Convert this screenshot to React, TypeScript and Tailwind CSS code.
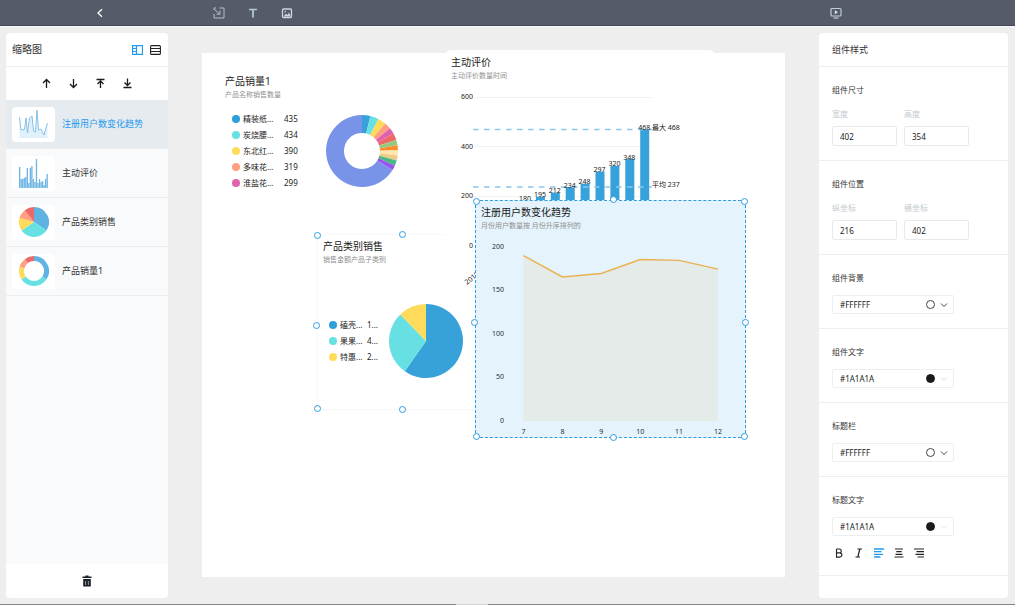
import React from "react";

type Slice = { color: string; to: number };

function slicePath(c: number, r: number, inner: number, from: number, to: number) {
  const pt = (deg: number, rad: number) => {
    const a = ((deg - 90) * Math.PI) / 180;
    return `${(c + rad * Math.cos(a)).toFixed(2)} ${(c + rad * Math.sin(a)).toFixed(2)}`;
  };
  const large = to - from > 180 ? 1 : 0;
  if (inner === 0) return `M${c} ${c}L${pt(from, r)}A${r} ${r} 0 ${large} 1 ${pt(to, r)}Z`;
  return `M${pt(from, inner)}L${pt(from, r)}A${r} ${r} 0 ${large} 1 ${pt(to, r)}L${pt(to, inner)}A${inner} ${inner} 0 ${large} 0 ${pt(from, inner)}Z`;
}

function Pie({ size, inner, slices }: { size: number; inner: number; slices: Slice[] }) {
  return (
    <svg width={size} height={size} viewBox={`0 0 ${size} ${size}`} className="shrink-0" aria-hidden="true">
      {slices.map((s, i) => (
        <path key={i} d={slicePath(size / 2, size / 2, inner, i ? slices[i - 1].to : 0, s.to)} fill={s.color} />
      ))}
    </svg>
  );
}

const donutSlices: Slice[] = [
  { color: "#37a2da", to: 13.5 },
  { color: "#67e0e3", to: 27 },
  { color: "#ffdb5c", to: 40 },
  { color: "#ff9f7f", to: 51 },
  { color: "#e062ae", to: 61 },
  { color: "#eb6a69", to: 72 },
  { color: "#96c97c", to: 81 },
  { color: "#ff8c2e", to: 89 },
  { color: "#ffe7ae", to: 97 },
  { color: "#efcb87", to: 105.5 },
  { color: "#48b984", to: 114 },
  { color: "#9b51f0", to: 122 },
  { color: "#7893e8", to: 360 },
];

const pieSlices: Slice[] = [
  { color: "#37a2da", to: 215 },
  { color: "#67e0e3", to: 316 },
  { color: "#ffdb5c", to: 360 },
];

const thumbSlices: Slice[] = [
  { color: "#5fb3e3", to: 124 },
  { color: "#67e0e3", to: 236 },
  { color: "#ffdb5c", to: 286 },
  { color: "#ff9f7f", to: 322 },
  { color: "#eb6a69", to: 360 },
];

const salesLegend = [
  { name: "精装纸...", value: "435", dot: "bg-[#2f9fdc]" },
  { name: "炭烧腰...", value: "434", dot: "bg-[#67e0e3]" },
  { name: "东北红...", value: "390", dot: "bg-[#ffdb5c]" },
  { name: "多味花...", value: "319", dot: "bg-[#ff9f7f]" },
  { name: "淮盐花...", value: "299", dot: "bg-[#e062ae]" },
];

const categoryLegend = [
  { name: "磕壳...", value: "1...", dot: "bg-[#2f9fdc]" },
  { name: "果果...", value: "4...", dot: "bg-[#67e0e3]" },
  { name: "特惠...", value: "2...", dot: "bg-[#ffdb5c]" },
];

function Legend({ rows, nameClass }: { rows: typeof salesLegend; nameClass: string }) {
  return (
    <ul className="text-[8px] leading-4 text-[#222]">
      {rows.map((r) => (
        <li key={r.name} className="flex items-center gap-[3px]">
          <span className={`size-2 rounded-full ${r.dot}`} />
          <span className={`whitespace-nowrap ${nameClass}`}>{r.name}</span>
          <span>{r.value}</span>
        </li>
      ))}
    </ul>
  );
}

function WidgetHead({ title, sub }: { title: string; sub: string }) {
  return (
    <header className="px-[6px] pt-[5px]">
      <h3 className="text-[10px] leading-[14px] text-[#1a1a1a]">{title}</h3>
      <p className="mt-px text-[7px] leading-[11px] text-[#8f8f8f]">{sub}</p>
    </header>
  );
}

function Handle({ at }: { at: string }) {
  return <span className={`absolute size-[7px] rounded-full border border-[#2f9be0] bg-white ${at}`} />;
}

const bars = [180, 195, 212, 234, 248, 297, 320, 348, 468];

function BarChart() {
  const y = (v: number) => 164 - v * 0.247;
  return (
    <svg width="270" height="205" viewBox="0 0 270 205" className="text-[7px]" fill="#222" aria-hidden="true">
      {[600, 400, 200, 0].map((v) => (
        <g key={v}>
          <path d={`M29 ${Math.round(y(v)) + 0.5}H207`} stroke="#f3f3f3" />
          <text x="28" y={y(v) + 2.5} textAnchor="end">{v}</text>
        </g>
      ))}
      {bars.map((v, i) => (
        <rect key={v} x={76 + i * 14.9} y={y(v)} width="9" height={164 - y(v)} fill="#37a2da" />
      ))}
      <path d="M28 48.5H207M28 106H207" stroke="#8cc6ec" strokeWidth="1.3" strokeDasharray="5.500 5.500" />
      {bars.map((v, i) => (
        <text key={v} x={80 + i * 14.9} y={y(v) + 0.5} textAnchor="middle">{v}</text>
      ))}
      <text x="207" y="49">最大 468</text>
      <text x="207" y="106">平均 237</text>
      <text x="22" y="204" transform="rotate(-38 22 204)">2018</text>
    </svg>
  );
}

const trend = [189, 164.5, 168.5, 184.5, 183.5, 173.5];

function TrendChart() {
  const y = (v: number) => 189.5 - v * 0.8725;
  const pts = trend.map((v, i) => `${48.5 + i * 38.9},${y(v)}`).join(" ");
  return (
    <svg width="270" height="207" viewBox="0 0 270 207" className="text-[7px]" fill="#26303a" aria-hidden="true">
      <polygon points={`48.5,190 ${pts} 243,190`} fill="#e5ebe9" />
      <polyline points={pts} fill="none" stroke="#ebb14e" strokeWidth="1.4" />
      {[200, 150, 100, 50, 0].map((v) => (
        <text key={v} x="29" y={y(v) + 2.5} textAnchor="end">{v}</text>
      ))}
      {[7, 8, 9, 10, 11, 12].map((m, i) => (
        <text key={m} x={48.5 + i * 38.9} y="203" textAnchor="middle">{m}</text>
      ))}
    </svg>
  );
}

function LineThumb() {
  return (
    <svg width="29" height="30" viewBox="0 0 29 30" aria-hidden="true">
      <path d="M.5 8L2 21L5.500 20.500L7 9L8.500 24L10.500 9L13 7L14.500 22L16.500 23L18 1L19.500 21L22 20L25 26L28.500 14V29H.5Z" fill="#e1f1fb" />
      <path d="M.5 8L2 21L5.500 20.500L7 9L8.500 24L10.500 9L13 7L14.500 22L16.500 23L18 1L19.500 21L22 20L25 26L28.500 14" fill="none" stroke="#7dbbe3" strokeWidth=".9" />
    </svg>
  );
}

function BarThumb() {
  const h = [21, 9, 9, 10, 11, 20, 5, 20, 22, 9, 6, 29, 5, 9, 6, 7, 3, 9, 14];
  return (
    <svg width="29" height="30" viewBox="0 0 29 30" fill="#6bb4e4" aria-hidden="true">
      {h.map((v, i) => (
        <rect key={i} x={i * 1.53} y={30 - v} width="1.3" height={v} />
      ))}
    </svg>
  );
}

const layers = [
  { name: "注册用户数变化趋势", thumb: <LineThumb />, active: true },
  { name: "主动评价", thumb: <BarThumb />, active: false },
  { name: "产品类别销售", thumb: <Pie size={30} inner={0} slices={thumbSlices} />, active: false },
  { name: "产品销量1", thumb: <Pie size={30} inner={10} slices={thumbSlices} />, active: false },
];

const arrows = [
  { label: "上移", d: "M5.500 10V1.500M2 5L5.500 1.500L9 5" },
  { label: "下移", d: "M5.500 1V9.500M2 6L5.500 9.500L9 6" },
  { label: "置顶", d: "M5.500 10V3M2.500 6L5.500 3L8.500 6M1.500 1.500H9.500" },
  { label: "置底", d: "M5.500 0.500V7M2.500 4.500L5.500 7.500L8.500 4.500M1.500 9.500H9.500" },
];

function LayerPanel() {
  return (
    <aside className="flex w-[162px] shrink-0 flex-col overflow-hidden rounded bg-white">
      <div className="flex h-[34px] items-center border-b border-[#eee] pr-[7px] pl-[6px]">
        <h2 className="flex-1 text-[10px] text-[#333]">缩略图</h2>
        <button aria-label="缩略图视图" className="mr-[7px]">
          <svg width="11" height="10" viewBox="0 0 11 10" fill="none" stroke="#1e9af0" strokeWidth="1.2">
            <path d="M.5 .7H10.500V9.300H.5ZM4.500 .7V9.300M1 3.500H4M1 6.500H4" />
          </svg>
        </button>
        <button aria-label="列表视图">
          <svg width="11" height="10" viewBox="0 0 11 10" fill="none" stroke="#222" strokeWidth="1.1">
            <rect x=".6" y=".6" width="9.800" height="8.800" rx="1" />
            <path d="M.5 3.500H10.500M.5 6.500H10.500" />
          </svg>
        </button>
      </div>
      <div className="flex h-[33px] items-center justify-center">
        {arrows.map((a) => (
          <button key={a.label} aria-label={a.label} className="flex w-[27px] justify-center">
            <svg width="11" height="11" viewBox="0 0 11 11" fill="none" stroke="#1a1a1a" strokeWidth="1.3">
              <path d={a.d} />
            </svg>
          </button>
        ))}
      </div>
      <ul className="flex-1 bg-[#f9fafc]">
        {layers.map((l) => (
          <li key={l.name} className={`border-b border-[#eceef0] ${l.active ? "bg-[#e6ebef]" : ""}`}>
            <button className="flex h-12 w-full items-center gap-[7px] pl-[6px] text-left">
              <span className="flex h-[35px] w-[43px] items-center justify-center rounded bg-white">{l.thumb}</span>
              <span className={`text-[9px] ${l.active ? "text-[#1e9af0]" : "text-[#333]"}`}>{l.name}</span>
            </button>
          </li>
        ))}
      </ul>
      <div className="flex h-[34px] items-center justify-center">
        <button aria-label="删除">
          <svg width="10" height="12" viewBox="0 0 10 12" fill="#1c2128">
            <path d="M3.500 .5H6.500V1.500H9.500V3H.5V1.500H3.500Z" />
            <path d="M1.200 4H8.800V11.500H1.200Z" />
            <path d="M3.600 6V10M6.400 6V10" stroke="#8d99a6" />
          </svg>
        </button>
      </div>
    </aside>
  );
}

function Canvas() {
  return (
    <main className="relative mx-[34px] mt-[20px] mb-[21px] min-w-0 flex-1 bg-white">
      <section className="absolute top-[16px] left-[17px]">
        <WidgetHead title="产品销量1" sub="产品名称销售数量" />
        <div className="mt-[11px] flex items-center gap-[28px] pl-[13px]">
          <Legend rows={salesLegend} nameClass="w-[38px]" />
          <Pie size={72} inner={18} slices={donutSlices} />
        </div>
      </section>

      <section className="absolute top-[181px] left-[115px] h-[176px] w-[170px] bg-white">
        <span className="absolute inset-0 border border-[#f8f8f8]" />
        <WidgetHead title="产品类别销售" sub="销售金额产品子类别" />
        <div className="mt-[39px] flex items-center gap-[11px] pl-3">
          <Legend rows={categoryLegend} nameClass="w-6" />
          <Pie size={74} inner={0} slices={pieSlices} />
        </div>
        <Handle at="-top-[2px] -left-[3px]" />
        <Handle at="-top-[3px] left-[82px]" />
        <Handle at="top-[88px] -left-[4px]" />
        <Handle at="-bottom-[2px] -left-[3px]" />
        <Handle at="-bottom-[3px] left-[82px]" />
      </section>

      <section className="absolute -top-[3px] left-[243px] w-[270px] rounded-md bg-white">
        <WidgetHead title="主动评价" sub="主动评价数量时间" />
        <BarChart />
      </section>

      <section className="absolute top-[147px] left-[273px] w-[271px] bg-[#e4f3fc]">
        <WidgetHead title="注册用户数变化趋势" sub="月份用户数量按 月份升序排列的" />
        <TrendChart />
        <span className="absolute inset-0 border border-dashed border-[#2f9be0]" />
        <Handle at="-top-[2px] -left-[2px]" />
        <Handle at="-top-[4px] left-[135px]" />
        <Handle at="-top-[2px] -right-[2px]" />
        <Handle at="top-[119px] -left-[4px]" />
        <Handle at="top-[119px] -right-[3px]" />
        <Handle at="-bottom-[2px] -left-[2px]" />
        <Handle at="-bottom-[3px] left-[135px]" />
        <Handle at="-bottom-[2px] -right-[2px]" />
      </section>
    </main>
  );
}

function NumberField({ id, label, value }: { id: string; label: string; value: string }) {
  return (
    <div className="w-[65px]">
      <label htmlFor={id} className="block text-[8px] leading-3 text-[#c3cad0]">{label}</label>
      <input id={id} defaultValue={value} className="mt-[6px] block h-5 w-full rounded-xs border border-[#e6eaed] px-[7px] text-[8px] text-[#222]" />
    </div>
  );
}

function ColorField({ id, title, value, dark, children }: { id: string; title: string; value: string; dark?: boolean; children?: React.ReactNode }) {
  return (
    <section className="border-b border-[#eee] px-[13px] pt-[17px] pb-[14px]">
      <label htmlFor={id} className="block text-[8px] leading-3 text-[#333]">{title}</label>
      <div className="mt-[11px] flex h-[19px] w-[122px] items-center rounded-xs border border-[#eceff0] pr-[5px] pl-[7px]">
        <input id={id} defaultValue={value} className="min-w-0 flex-1 text-[8px] text-[#222]" />
        <button aria-label={`${title}颜色`} className="flex items-center gap-[5px]">
          <span className={`size-[9px] rounded-full border ${dark ? "border-[#1a1a1a] bg-[#1a1a1a]" : "border-[#444] bg-white"}`} />
          <svg width="8" height="6" viewBox="0 0 8 6" fill="none" stroke={dark ? "#dcdfe2" : "#444"}>
            <path d="M1 1.500L4 4.500L7 1.500" />
          </svg>
        </button>
      </div>
      {children}
    </section>
  );
}

const styles = [
  { label: "加粗", color: "#222", d: "M2.500 1H5.300A1.900 1.900 0 0 1 5.300 4.900H2.500M2.500 4.900H5.800A2.100 2.100 0 0 1 5.800 9.100H2.500V1", sw: 1.1 },
  { label: "斜体", color: "#222", d: "M3.500 1H8M1.500 9H6M5.800 1L3.800 9", sw: 1.2 },
  { label: "左对齐", color: "#1e9af0", d: "M0 1H10M0 3.700H7.500M0 6.300H9M0 9H6.500", sw: 1.3 },
  { label: "居中", color: "#222", d: "M1 1H9M2.300 3.700H7.700M1.500 6.300H8.500M.5 9H9.500", sw: 1.2 },
  { label: "右对齐", color: "#222", d: "M0 1H10M2.500 3.700H10M1.500 6.300H10M3.500 9H10", sw: 1.2 },
];

function StylePanel() {
  return (
    <aside className="w-[189px] shrink-0 overflow-hidden rounded bg-white">
      <h2 className="flex h-[34px] items-center border-b border-[#eee] px-[13px] text-[9px] text-[#333]">组件样式</h2>
      <section className="border-b border-[#eee] px-[13px] pt-[17px] pb-[14px]">
        <h3 className="text-[8px] leading-3 text-[#333]">组件尺寸</h3>
        <div className="mt-3 flex gap-[7px]">
          <NumberField id="width" label="宽度" value="402" />
          <NumberField id="height" label="高度" value="354" />
        </div>
      </section>
      <section className="border-b border-[#eee] px-[13px] pt-[17px] pb-[14px]">
        <h3 className="text-[8px] leading-3 text-[#333]">组件位置</h3>
        <div className="mt-3 flex gap-[7px]">
          <NumberField id="pos-y" label="纵坐标" value="216" />
          <NumberField id="pos-x" label="横坐标" value="402" />
        </div>
      </section>
      <ColorField id="bg" title="组件背景" value="#FFFFFF" />
      <ColorField id="fg" title="组件文字" value="#1A1A1A" dark />
      <ColorField id="title-bg" title="标题栏" value="#FFFFFF" />
      <ColorField id="title-fg" title="标题文字" value="#1A1A1A" dark>
        <div className="mt-[9px] flex h-4 items-center gap-[10px] pl-[2px]">
          {styles.map((s) => (
            <button key={s.label} aria-label={s.label}>
              <svg width="10" height="10" viewBox="0 0 10 10" fill="none" stroke={s.color} strokeWidth={s.sw}>
                <path d={s.d} />
              </svg>
            </button>
          ))}
        </div>
      </ColorField>
    </aside>
  );
}

function TopBar() {
  return (
    <header className="flex h-[26px] items-center border-b border-[#424753] bg-[#555b69]">
      <div className="flex w-[200px] justify-center">
        <button aria-label="返回">
          <svg width="8" height="10" viewBox="0 0 8 10" fill="none" stroke="#fff" strokeWidth="1.3">
            <path d="M6 1.200L2 5L6 8.800" />
          </svg>
        </button>
      </div>
      <div className="flex items-center gap-[22px] pl-[13px]">
        <button aria-label="导入组件">
          <svg width="12" height="12" viewBox="0 0 12 12" fill="none" stroke="#b4c0cc">
            <path d="M6.500 1H11V11H1V7M1 3V1H3M1.500 2.500L6.500 6.800M7 3.500V7.200H3.500" />
          </svg>
        </button>
        <button aria-label="文本">
          <svg width="12" height="12" viewBox="0 0 12 12" fill="none" stroke="#b9cad9" strokeWidth="1.7">
            <path d="M2 2.500H10M6 2.500V10.500" />
          </svg>
        </button>
        <button aria-label="图片">
          <svg width="12" height="12" viewBox="0 0 12 12" fill="none" stroke="#c9d6e1" strokeWidth="1.3">
            <rect x="1.500" y="2" width="9" height="8.500" rx="1" />
            <path d="M2.500 9.500L5 6.500L6.500 8L8 5.500L9.800 9.500Z" fill="#c9d6e1" stroke="none" />
            <circle cx="4.200" cy="4.600" r=".8" fill="#c9d6e1" stroke="none" />
          </svg>
        </button>
      </div>
      <button aria-label="预览" className="mr-[173px] ml-auto">
        <svg width="12" height="12" viewBox="0 0 12 12" fill="none" stroke="#bccddb" strokeWidth="1.2">
          <rect x="1" y="1.500" width="10" height="7.500" rx="1" />
          <path d="M3.500 11H8.500" />
          <path d="M4.800 3.200L8 5.200L4.800 7.200Z" fill="#dbe6ef" stroke="none" />
        </svg>
      </button>
    </header>
  );
}

export default function App() {
  return (
    <div className="flex min-h-screen flex-col bg-[#eee] font-['Noto_Sans','Noto_Sans_CJK_SC',sans-serif]">
      <TopBar />
      <div className="flex flex-1 border-t border-[#f8f8f8] pt-[6px] pr-[7px] pb-[6px] pl-[6px]">
        <LayerPanel />
        <Canvas />
        <StylePanel />
      </div>
      <div className="flex h-px justify-center bg-[#858585]">
        <span className="mr-[72px] w-8 bg-[#d5d5d5]" />
      </div>
    </div>
  );
}
